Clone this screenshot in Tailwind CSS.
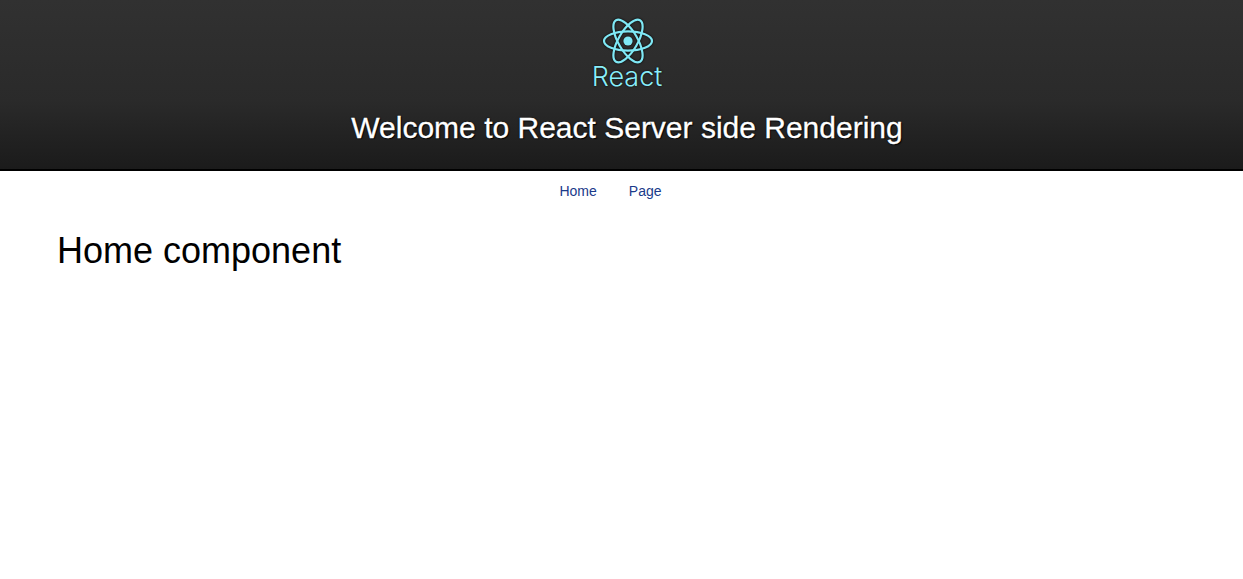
<!DOCTYPE html>
<html lang="en">
  <head>
    <meta charset="UTF-8" />
    <meta name="viewport" content="width=device-width, initial-scale=1.0" />
    <title>React Server side Rendering</title>
    <script src="https://cdn.jsdelivr.net/npm/@tailwindcss/browser@4"></script>
  </head>
  <body class="bg-white font-['Liberation_Sans',Arial,sans-serif] text-black">
    <header class="h-[171px] pl-[11px] bg-gradient-to-b from-[#313131] via-[#2a2a2a] via-60% to-[#1b1b1b] border-b-2 border-black flex flex-col items-center text-center">
      <svg class="mt-[17px] ml-[1px] w-[52px] h-[48px] drop-shadow-[0_0_1px_#000]" viewBox="0 0 52 48" fill="none" stroke="#7fe8f5" stroke-width="2.2">
        <circle cx="26" cy="24" r="4.6" fill="#7fe8f5" stroke="none" />
        <ellipse cx="26" cy="24" rx="24" ry="9.6" />
        <ellipse cx="26" cy="24" rx="24" ry="9.6" transform="rotate(60 26 24)" />
        <ellipse cx="26" cy="24" rx="24" ry="9.6" transform="rotate(120 26 24)" />
      </svg>
      <div class="mt-[-4px] font-['Inter',sans-serif] font-light text-[27px] leading-[32px] text-[#8aeefa] [text-shadow:0_0_2px_#000]">React</div>
      <h1 class="mt-[17px] text-[30px] leading-[36px] text-white [-webkit-text-stroke:0.3px_#fff] [text-shadow:1px_1px_1px_#000,0_0_2px_#000]">Welcome to React Server side Rendering</h1>
    </header>
    <nav class="flex justify-center gap-[32px] pt-[12px] pr-[22px] text-[14px] leading-[16px] text-[#1a3a8a]">
      <a href="#">Home</a>
      <a href="#">Page</a>
    </nav>
    <main class="pl-[57px] pt-[30px]">
      <h2 class="text-[36px] leading-[44px] font-normal">Home component</h2>
    </main>
  </body>
</html>
